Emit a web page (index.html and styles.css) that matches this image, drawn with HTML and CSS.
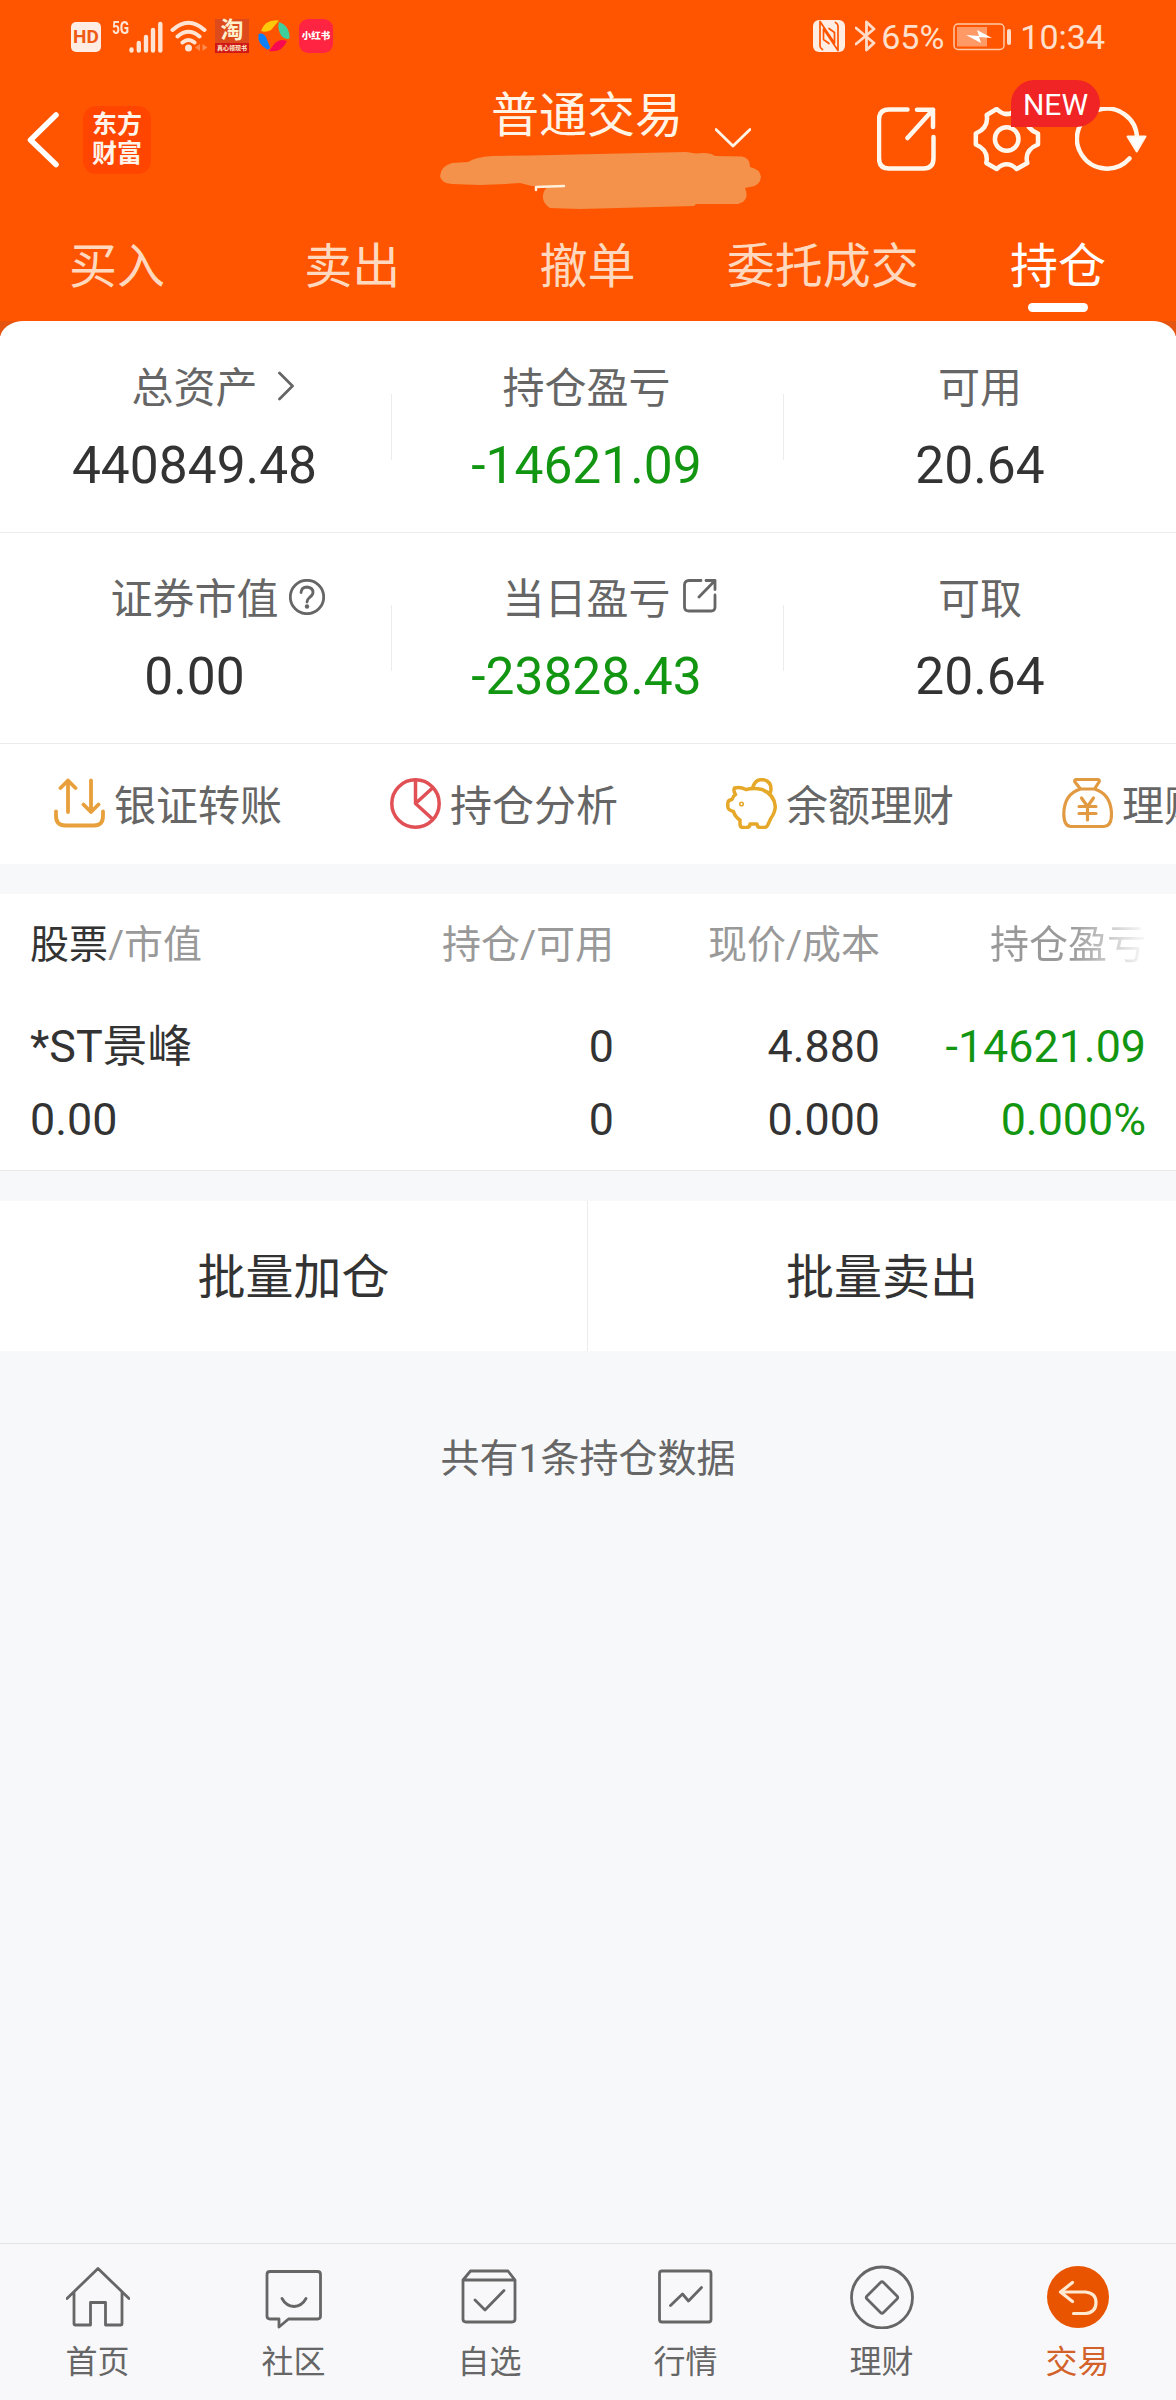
FILE: index.html
```html
<!DOCTYPE html>
<html lang="zh-CN">
<head>
  <meta charset="UTF-8" />
  <title>普通交易 - 持仓</title>
  <link rel="stylesheet" href="styles.css">
</head>
<body>
  <div class="app">
    <header class="top">
      <div class="status-bar">
        <div class="status-left">
          <span class="hd">HD</span>
          <span class="net">5G</span>
          <svg class="signal" width="34" height="32" viewBox="0 0 34 32">
            <path d="M2.5 28.5v1M9.8 22v7.5M17 16v13.5M24 9v20.5M31.3 3v26.5" />
          </svg>
          <svg class="wifi" width="38" height="34" viewBox="0 0 38 34">
            <path d="M2.500 10Q18.500 -4.500 34.500 10M7.500 16.500Q18.500 7 29.500 16.500M12.500 22.500Q18.500 17.500 24.500 22.500" />
            <circle cx="18.500" cy="28" r="3.500" />
            <path class="faint" d="M30 24v7l-5-3.500zM32.500 24v7l5-3.500z" />
          </svg>
          <div class="taobao">
            <span class="tao">淘</span>
            <span class="tao-sub">真心领现书</span>
          </div>
          <svg class="wheel" width="34" height="34" viewBox="0 0 34 34">
            <path fill="#ffc80a" d="M4 12Q8 0 22 1.500L14 11Q9 14 4 12z" />
            <path fill="#3fcf9c" d="M22 3Q33 7 32.500 19.500Q28 21 24.500 17Q20 10 22 3z" />
            <path fill="#f80a50" d="M30 22Q25 34 12 32L18 24Q23 19 30 22z" />
            <path fill="#0a80f8" d="M1.500 15Q6 13 9 18L13 28Q13 31 10 30.500Q0 25 1.500 15z" />
          </svg>
          <span class="xhs">小红书</span>
        </div>
        <div class="status-right">
          <svg class="nfc" width="32" height="32" viewBox="0 0 32 32">
            <rect x="0" y="0" width="32" height="32" rx="6" fill="#ffece2" />
            <path d="M7 1.500V26Q7 28 9.500 29.500M7 1.500L21.500 23V12.500L16 8.500M25 30.500V6Q25 4 22.500 2.500M25 30.500L10.500 9V19.500L16 23.500" fill="none" stroke="#ff5500" stroke-width="1.700" />
          </svg>
          <svg class="bt" width="21" height="32" viewBox="0 0 21 32">
            <path d="M1 8l18 15-7.500 7V2l7.500 7L1 24" />
          </svg>
          <span class="percent">65%</span>
          <svg class="battery" width="58" height="28" viewBox="0 0 58 28">
            <rect x="1" y="1" width="50" height="25.500" rx="4" fill="none" stroke="#ffc9a8" stroke-width="1.500" />
            <rect x="4" y="4" width="30" height="19.500" fill="#ff9a66" />
            <path d="M13 12l13 1-2-6 15 8-13-1 2 6z" fill="#fff" />
            <rect x="54" y="6" width="4" height="16" rx="2" fill="#ffdcc8" />
          </svg>
          <span class="clock">10:34</span>
        </div>
      </div>

      <div class="title-bar">
        <div class="title-left">
          <svg class="back" width="32" height="56" viewBox="0 0 32 56">
            <path d="M29 3L3.500 28L29 52.500" />
          </svg>
          <div class="logo">东方<br>财富</div>
        </div>
        <div class="title-center">
          <div class="title">
            <h1>普通交易</h1>
            <svg class="down" width="36" height="20" viewBox="0 0 36 20">
              <path d="M1 1.500l17 16.500 17-16.500" />
            </svg>
          </div>
          <svg class="scribble" width="322" height="58" viewBox="0 0 322 58">
            <path d="M0 24Q1 14 12 11L28 10Q36 5 52 4L90 3.500L180 1.500L246 0Q254 1 256 1.500Q270 -.5 275 4L302 4.500Q310 6 310 15Q320 17 321 25Q320 34 310 35L305 36Q309 45 303 50L298 52L256 52L254 54L140 57L110 56Q102 51 103 43Q104 37 108 35L92 34L80 31L66 32L40 33L12 32Q1 31 0 24z" />
            <path class="scrap" d="M96 38v-3l28-1" />
          </svg>
        </div>
        <div class="title-right">
          <svg class="line-icon" width="60" height="65" viewBox="0 0 60 65">
            <path d="M30.500 2.500H12Q2 2.500 2 12.500V51Q2 61.500 12 61.500H46.500Q56.500 61.500 56.500 51V30M40 2.700H56V20M56 2.700L30.500 31" />
          </svg>
          <div class="settings">
            <svg class="line-icon" width="68" height="65" viewBox="0 0 68 65">
              <path d="M13.700 8L23.700 2Q33.700 12 43.700 2L54.300 8Q51 21 65 26.500V37.500Q51 43 54.300 56L43.700 62Q33.700 52.500 23.700 62L13.300 56Q16 43 2.800 37.500V26.500Q16 21 13.700 8z" />
              <circle cx="33.700" cy="32" r="11.800" />
            </svg>
            <span class="badge">NEW</span>
          </div>
          <svg class="line-icon" width="72" height="65" viewBox="0 0 72 65">
            <path d="M54.500 51.500A30 30 0 1 1 62 31" />
            <path class="head" d="M52.500 29.500H70.500L61.700 44.500z" />
          </svg>
        </div>
      </div>

      <nav class="tabs">
        <a>买入</a>
        <a>卖出</a>
        <a>撤单</a>
        <a>委托成交</a>
        <a class="active">持仓</a>
      </nav>
    </header>

    <section class="assets">
      <div class="asset-row">
        <div class="asset">
          <div class="label">总资产
            <svg class="arrow" width="16" height="30" viewBox="0 0 16 30"><path d="M1.500 2l13 13-13 13" /></svg>
          </div>
          <div class="value">440849.48</div>
        </div>
        <div class="asset">
          <div class="label">持仓盈亏</div>
          <div class="value green">-14621.09</div>
        </div>
        <div class="asset">
          <div class="label">可用</div>
          <div class="value">20.64</div>
        </div>
      </div>
      <div class="asset-row">
        <div class="asset">
          <div class="label">证券市值
            <svg class="help" width="36" height="36" viewBox="0 0 36 36">
              <circle cx="18" cy="18" r="16.700" />
              <path d="M12 13.500Q12.500 8 18 8Q24 8.500 24 13.500Q24 16 20.500 18.500Q18 20.500 18 23" />
              <circle class="dot" cx="18" cy="27.500" r="2.200" />
            </svg>
          </div>
          <div class="value">0.00</div>
        </div>
        <div class="asset">
          <div class="label">当日盈亏
            <svg class="out" width="34" height="34" viewBox="0 0 34 34">
              <path d="M18 1.500H6Q1.500 1.500 1.500 6V28Q1.500 32 6 32H28Q32 32 32 28V16M23 1.500H32V10.500M32 1.500L16 18" />
            </svg>
          </div>
          <div class="value green">-23828.43</div>
        </div>
        <div class="asset">
          <div class="label">可取</div>
          <div class="value">20.64</div>
        </div>
      </div>
    </section>

    <section class="quick">
      <a>
        <svg width="51" height="51" viewBox="0 0 51 51" stroke="#e8a03c" stroke-width="3.800">
          <path d="M14 34V2.500M6.500 10L14 2.500L21.500 10M37 2.500V34M29.500 26.500L37 34L44.500 26.500M2 33.500V38Q2 47.500 11.500 47.500H40Q49 47.500 49 38V33.500" />
        </svg>
        <span>银证转账</span>
      </a>
      <a>
        <svg width="51" height="51" viewBox="0 0 51 51" stroke="#e05055" stroke-width="3.500">
          <circle cx="25.500" cy="25.500" r="23.700" />
          <path d="M25.500 2V25.500L42.500 10M25.500 25.500L42.500 41" />
        </svg>
        <span>持仓分析</span>
      </a>
      <a>
        <svg width="51" height="51" viewBox="0 0 51 51" stroke="#e6a828" stroke-width="3.500">
          <path d="M8.500 10Q14 8.500 20 11.500Q28 9.500 36 11.500Q48 16 49.300 28.500Q49 35 45 40L41.500 47.500Q40.500 49.500 38 49.500H34Q31.500 49.500 31 46H24Q24 49.500 20.500 49.500H17Q14 49.500 14 46V42Q9 39 7.500 33.500Q2 32 1.800 29V25Q2 22 6 21.500Q7 18 9.500 16.500Q7 13 8.500 10z" />
          <path d="M26.500 10Q29 1.500 36 1.500Q45 2.500 45 11Q45 14 43.500 16" />
          <circle cx="15.500" cy="26" r=".8" />
        </svg>
        <span>余额理财</span>
      </a>
      <a>
        <svg width="51" height="51" viewBox="0 0 51 51" stroke="#e29a42" stroke-width="3.200">
          <path d="M14 1.500H36Q38 2 37 4L32.500 11H18.500L13 4Q12 2 14 1.500zM18.500 11Q2 16 1.800 36Q2 48.500 9 48.500H42Q49.500 48.500 49.500 36Q49 16 32.500 11" />
          <path d="M19.500 20l6 8.500 6-8.500M25.500 28.500V42M17 28.500H34M17 35.500H34" />
        </svg>
        <span>理财</span>
      </a>
    </section>

    <section class="holdings">
      <div class="grid head-row">
        <div><b>股票</b>/市值</div>
        <div>持仓/可用</div>
        <div>现价/成本</div>
        <div class="fade">持仓盈亏</div>
      </div>
      <div class="body-rows">
        <div class="grid">
          <div>*ST景峰</div>
          <div>0</div>
          <div>4.880</div>
          <div class="green">-14621.09</div>
        </div>
        <div class="grid">
          <div>0.00</div>
          <div>0</div>
          <div>0.000</div>
          <div class="green">0.000%</div>
        </div>
      </div>
    </section>

    <section class="batch">
      <a>批量加仓</a>
      <a>批量卖出</a>
    </section>

    <p class="summary">共有1条持仓数据</p>

    <nav class="bottom-nav">
      <a>
        <svg width="64" height="64" viewBox="0 0 64 64">
          <path d="M1 33.500L32 3.500L63 33.500M8 27.500V59Q8 60 9 60H24.500V37.500H39.500V60H55Q56 60 56 59V27.500" />
        </svg>
        首页
      </a>
      <a>
        <svg width="64" height="64" viewBox="0 0 64 64">
          <path d="M8 6.500H55.500Q58.500 6.500 58.500 9.500V51Q58.500 54 55.500 54H26.500L17 62V54H8Q5 54 5 51V9.500Q5 6.500 8 6.500zM20 33.500Q24 41 32 41.500Q40 41 44 33.500" />
        </svg>
        社区
      </a>
      <a>
        <svg width="64" height="64" viewBox="0 0 64 64">
          <path d="M5 15L12.500 6H50L57 15V54Q57 57 54 57H8Q5 57 5 54zM5 15H57M17 35L27 45L46 25.500" />
        </svg>
        自选
      </a>
      <a>
        <svg width="64" height="64" viewBox="0 0 64 64">
          <rect x="5.500" y="6" width="51.500" height="51" rx="2.500" />
          <path d="M16.500 40.500L28.500 29L34.500 36L47.500 22.500" />
        </svg>
        行情
      </a>
      <a>
        <svg width="64" height="64" viewBox="0 0 64 64">
          <circle cx="32" cy="32.500" r="30.500" />
          <path d="M30.500 17.500Q32 16 33.500 17.500L47 31Q48.500 32.500 47 34L33.500 47.500Q32 49 30.500 47.500L17 34Q15.500 32.500 17 31z" />
        </svg>
        理财
      </a>
      <a class="active">
        <svg width="64" height="64" viewBox="0 0 64 64">
          <circle cx="32" cy="32" r="31" />
          <path d="M26.500 17.500L14.500 27L26.500 36.500M14.500 27H39.500Q50 28 50 37.500Q50 47.500 39.500 48.500H27.500" />
        </svg>
        交易
      </a>
    </nav>
  </div>
</body>
</html>
```
FILE: styles.css
```css
* {
  box-sizing: border-box;
}
body {
  margin: 0;
  font-family: Roboto, "Noto Sans CJK SC", sans-serif;
  background: #f7f8fa;
  color: #333;
}
.app {
  width: 1176px;
  height: 2400px;
  display: flex;
  flex-direction: column;
  overflow: hidden;
}
svg {
  display: block;
  flex: none;
  fill: none;
  stroke-linecap: round;
  stroke-linejoin: round;
}
.green {
  color: #129612;
}

/* header */
.top {
  height: 321px;
  background: #ff5500;
}
.status-bar {
  height: 72px;
  padding: 0 72px 0 71px;
  display: flex;
  justify-content: space-between;
  align-items: center;
  color: #ffe0cc;
}
.status-left, .status-right {
  display: flex;
  align-items: center;
}
.hd {
  width: 30px;
  height: 30px;
  margin-top: 2px;
  border-radius: 5px;
  background: #ffece2;
  color: #ee5a14;
  font-weight: 700;
  font-size: 19px;
  line-height: 30px;
  text-align: center;
}
.net {
  width: 17px;
  margin: -17px 0 0 11px;
  font-weight: 700;
  font-size: 19px;
  line-height: 19px;
  color: #ffe4d4;
  transform: scaleX(.72);
  transform-origin: left;
}
.signal {
  margin-top: 1px;
  stroke: #ffe4d4;
  stroke-width: 4.4;
}
.wifi {
  margin: 1px 0 0 7px;
  stroke: #ffe4d4;
  stroke-width: 4;
}
.wifi circle {
  fill: #ffe4d4;
  stroke: none;
}
.wifi .faint {
  fill: #ff8a50;
  stroke: none;
}
.taobao {
  width: 34px;
  height: 34px;
  margin-left: 7px;
  background: linear-gradient(#dd4a1c 70%, #d01818 70%);
  color: #fff0cc;
  display: flex;
  flex-direction: column;
  align-items: center;
}
.tao {
  font-weight: 700;
  font-size: 23px;
  line-height: 24px;
}
.tao-sub {
  font-size: 6px;
  font-weight: 700;
  line-height: 9px;
  white-space: nowrap;
}
.wheel {
  margin-left: 8px;
}
.xhs {
  width: 34px;
  height: 34px;
  margin-left: 8px;
  border-radius: 9px;
  background: #ff2442;
  color: #fff;
  font-weight: 900;
  font-size: 9.5px;
  line-height: 33px;
  text-align: center;
}
.nfc {
  margin-left: 1px;
}
.bt {
  margin-left: 10px;
  stroke: #ffdcc8;
  stroke-width: 2.8;
}
.percent, .clock {
  font-size: 34px;
  line-height: 40px;
  margin-top: 2px;
}
.percent {
  margin-left: 5px;
  margin-right: 9px;
}
.battery {
  margin-top: 1px;
  margin-right: 9px;
}
.clock {
  margin-right: -1px;
}

.title-bar {
  height: 150px;
  display: grid;
  grid-template-columns: 440px 322px 1fr;
}
.title-left {
  display: flex;
  align-items: flex-start;
  padding: 34px 0 0 27px;
}
.back {
  margin-top: 6px;
  stroke: #fff;
  stroke-width: 5.5;
}
.logo {
  width: 68px;
  height: 68px;
  margin-left: 24px;
  padding-top: 4px;
  border-radius: 13px;
  background: #ff4500;
  color: #fff4ea;
  font-weight: 700;
  font-size: 25px;
  line-height: 29px;
  text-align: center;
}
.title {
  display: flex;
  justify-content: center;
  padding-right: 28px;
  height: 80px;
}
.title h1 {
  margin: 20px 0 0;
  font-weight: 400;
  font-size: 48px;
  line-height: 48px;
  color: #fff4e6;
}
.down {
  margin: 56px -68px 0 32px;
  stroke: #fff4e6;
  stroke-width: 2.8;
}
.scribble {
  fill: #f4914b;
}
.scrap {
  fill: none;
  stroke: #fff0dc;
  stroke-width: 2.5;
}
.title-right {
  display: flex;
  align-items: flex-start;
  padding: 35px 0 0 115px;
}
.line-icon {
  stroke: #fff6ec;
  stroke-width: 4.5;
}
.line-icon .head {
  fill: #fff;
  stroke-width: 2;
}
.settings {
  position: relative;
  margin: 0 34px 0 36px;
}
.badge {
  position: absolute;
  left: 38px;
  top: -27px;
  z-index: 1;
  width: 89px;
  height: 47px;
  border-radius: 24px 24px 24px 0;
  background: #f02424;
  color: #fff;
  font-size: 30px;
  line-height: 49px;
  text-align: center;
}

.tabs {
  display: grid;
  grid-template-columns: repeat(5, 1fr);
  height: 99px;
}
.tabs a {
  display: flex;
  flex-direction: column;
  align-items: center;
  padding-top: 21px;
  padding-right: 1px;
  font-size: 48px;
  line-height: 48px;
  color: #ffd9bf;
}
.tabs .active {
  color: #fff;
}
.tabs .active::after {
  content: "";
  width: 60px;
  height: 9px;
  margin-top: 12px;
  border-radius: 5px;
  background: #fff;
}

/* assets */
.assets {
  background: linear-gradient(#e65412 15px, #fff 15px);
}
.asset-row {
  height: 211px;
  display: grid;
  grid-template-columns: repeat(3, 1fr);
  background: #fff;
  border-bottom: 1px solid #ececec;
}
.asset-row:first-child {
  height: 212px;
  padding-top: 1px;
  border-radius: 24px 24px 0 0 / 18px 18px 0 0;
}
.asset {
  display: flex;
  flex-direction: column;
  align-items: center;
  padding-right: 3px;
  background: linear-gradient(#ececec, #ececec) right 72px / 1px 66px no-repeat;
}
.asset:last-child {
  padding-right: 0;
  background: none;
}
.label {
  display: flex;
  align-items: center;
  margin-top: 45px;
  font-size: 42px;
  line-height: 44px;
  color: #666;
}
.label svg {
  stroke: #666;
  stroke-width: 2.8;
}
.arrow {
  margin: -7px -36px 0 20px;
}
.help {
  margin: -7px -46px 0 10px;
}
.help .dot {
  fill: #666;
  stroke: none;
}
.out {
  margin: -8px -46px 0 12px;
}
.value {
  margin-top: 27px;
  font-size: 51.5px;
  line-height: 56px;
}

/* shortcuts */
.quick {
  height: 120px;
  padding-left: 54px;
  display: flex;
  background: #fff;
  overflow: hidden;
}
.quick a {
  flex: none;
  width: 336px;
  display: flex;
  align-items: center;
  gap: 9px;
  font-size: 42px;
  line-height: 48px;
  color: #666;
}
.quick svg {
  margin-top: -2px;
}
.quick span {
  padding-top: 5px;
}

/* holdings */
.holdings {
  margin-top: 30px;
  background: #fff;
  border-bottom: 1px solid #e9e9eb;
}
.grid {
  display: grid;
  grid-template-columns: 300px 284px 266px 266px;
  padding: 0 30px;
  font-size: 44.8px;
  line-height: 73px;
}
.grid > div {
  text-align: right;
  white-space: nowrap;
}
.grid > div:first-child {
  text-align: left;
}
.head-row {
  font-size: 39px;
  line-height: 98px;
  padding-top: 2px;
  color: #999;
}
.head-row b {
  font-weight: 400;
  color: #333;
}
.fade {
  color: transparent;
  background: linear-gradient(90deg, #999 72%, #f4f4f4 98%);
  -webkit-background-clip: text;
  background-clip: text;
}
.body-rows {
  padding: 16px 0 14px;
}

.batch {
  height: 150px;
  margin-top: 30px;
  display: grid;
  grid-template-columns: 1fr 1fr;
  background: #fff;
}
.batch a {
  padding-top: 2px;
  font-size: 48px;
  line-height: 150px;
  height: 150px;
  text-align: center;
}
.batch a:first-child {
  border-right: 1px solid #ececec;
}
.summary {
  margin: 84px 0 0;
  font-size: 39px;
  line-height: 48px;
  text-align: center;
  color: #666;
}

/* bottom nav */
.bottom-nav {
  height: 157px;
  margin-top: auto;
  padding-top: 21px;
  display: grid;
  grid-template-columns: repeat(6, 1fr);
  background: #f8f8fa;
  border-top: 1px solid #e4e4e6;
}
.bottom-nav a {
  display: flex;
  flex-direction: column;
  align-items: center;
  gap: 14px;
  padding-right: 1px;
  font-size: 32px;
  line-height: 38px;
  color: #666;
}
.bottom-nav svg {
  stroke: #666;
  stroke-width: 2.8;
}
.bottom-nav .active {
  color: #d2622a;
}
.bottom-nav .active svg {
  stroke: #ffe9d0;
  stroke-width: 3.2;
}
.bottom-nav .active circle {
  fill: #e85400;
  stroke: none;
}
```
